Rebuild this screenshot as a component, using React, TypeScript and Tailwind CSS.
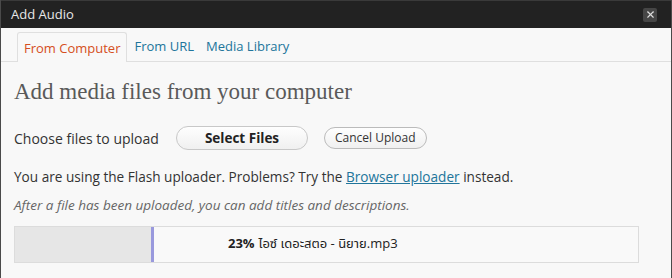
import { X } from "lucide-react";

const SANS = "font-['Open_Sans','Noto_Sans','Noto_Sans_Thai',sans-serif]";

export default function App() {
  return (
    <div
      className={`flex h-[278px] w-[672px] flex-col overflow-hidden border-x border-[#4a4a4a] bg-[#f8f8f8] ${SANS}`}
    >
      {/* Title bar */}
      <div className="flex h-[28px] shrink-0 items-center justify-between border-t border-[#3a3a3a] bg-[#222] pl-[10px] pr-[14px]">
        <span className="text-[13px] text-[#e8e8e8]">Add Audio</span>
        <button className="flex h-[14px] w-[14px] items-center justify-center rounded-[2px] bg-[#464646]">
          <X size={11} strokeWidth={2.5} className="text-[#ddd]" />
        </button>
      </div>

      {/* Tabs */}
      <div className="flex h-[34px] shrink-0 items-end border-b border-[#dfdfdf] pl-[16px] text-[13px]">
        <div className="-mb-px flex h-[30px] items-center rounded-t-[3px] border border-b-0 border-[#dfdfdf] bg-[#f8f8f8] px-[6px] pt-[2px] text-[#d54e21]">
          From Computer
        </div>
        <div className="flex h-[30px] items-center pl-[7px] pr-[12px] pt-[2px] text-[#21759b]">From URL</div>
        <div className="flex h-[30px] items-center pt-[2px] text-[#21759b]">Media Library</div>
      </div>

      {/* Body */}
      <div className="flex flex-col px-[13px]">
        <h3 className="mt-[16px] font-['Liberation_Serif',Georgia,serif] text-[23px] leading-[28px] text-[#5a5a5a]">
          Add media files from your computer
        </h3>

        <div className="mt-[20px] flex items-center text-[#333]">
          <span className="w-[162px] text-[14px]">Choose files to upload</span>
          <button className="h-[24px] w-[132px] rounded-full border border-[#c8c8c8] bg-gradient-to-b from-[#fefefe] to-[#f0f0f0] text-[13.5px] font-bold text-[#222]">
            Select Files
          </button>
          <button className="ml-[16px] h-[22px] rounded-full border border-[#bbb] bg-gradient-to-b from-[#fefefe] to-[#f0f0f0] px-[10px] text-[12px] text-[#333]">
            Cancel Upload
          </button>
        </div>

        <p className="mt-[17px] text-[13.6px] text-[#333]">
          You are using the Flash uploader. Problems? Try the{" "}
          <a className="text-[#21759b] underline">Browser uploader</a> instead.
        </p>

        <p className="mt-[8px] text-[13.5px] italic text-[#666]">
          After a file has been uploaded, you can add titles and descriptions.
        </p>

        <div className="mt-[10px] flex h-[37px] w-[625px] border border-[#dcdcdc] bg-[#f9f9f9]">
          <div className="w-[139px] border-r-[3px] border-[#9999dd] bg-[#e6e6e6]" />
          <div className="flex flex-1 items-center pl-[74px] text-[13px] text-[#222]">
            <b className="mr-[4px]">23%</b>ไอซ์ เดอะสตอ - นิยาย.mp3
          </div>
        </div>
      </div>
    </div>
  );
}
